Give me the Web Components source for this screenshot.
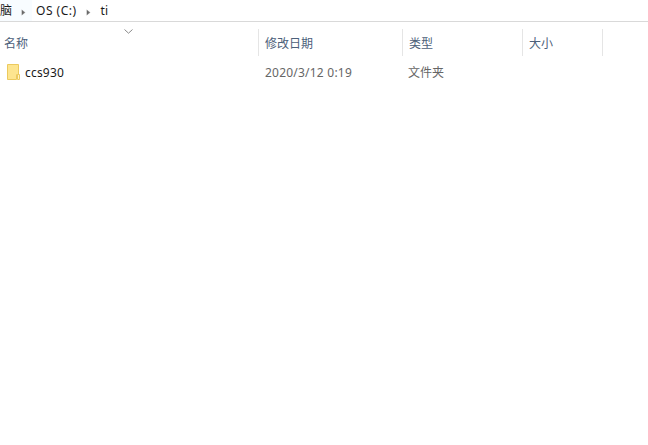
<!DOCTYPE html>
<html>
<head>
<meta charset="utf-8">
<style>
    html, body { margin: 0; padding: 0; background: #fff; }
    body { width: 648px; height: 445px; overflow: hidden; font-family: "Noto Sans", "Noto Sans CJK SC", sans-serif; font-size: 12px; }
</style>
</head>
<body>
<fm-address>
    <fm-crumb>脑</fm-crumb>
    <fm-crumb style="letter-spacing: .5px">OS (C:)</fm-crumb>
    <fm-crumb last>ti</fm-crumb>
</fm-address>
<fm-header>
    <fm-column style="--w: 259px; --pad: 4px" sorted>名称</fm-column>
    <fm-column style="--w: 144px">修改日期</fm-column>
    <fm-column style="--w: 120px">类型</fm-column>
    <fm-column style="--w: 80px">大小</fm-column>
</fm-header>
<fm-row name="ccs930" date="2020/3/12 0:19" type="文件夹"></fm-row>

<script>
customElements.define('fm-address', class extends HTMLElement {
    constructor() {
        super();
        this.attachShadow({mode: 'open'}).innerHTML = `
            <style>
                :host {
                    display: flex;
                    align-items: center;
                    height: 21px;
                    border-bottom: 1px solid #d9d9d9;
                    color: #1a1a1a;
                    background: linear-gradient(#f8fcff, #f8fcff) 0 0 / 32px 100% no-repeat;
                }
            </style>
            <slot></slot>`;
    }
});

customElements.define('fm-crumb', class extends HTMLElement {
    constructor() {
        super();
        var last = this.hasAttribute('last');
        this.attachShadow({mode: 'open'}).innerHTML = `
            <style>
                :host { display: flex; align-items: center; line-height: 18px; }
                svg { margin: 3px 10px 0 9px; }
            </style>
            <slot></slot>
            ${last ? '' : '<svg width="5" height="7" viewBox="0 0 5 7"><path d="M.6 .4 L4.4 3.5 L.6 6.6 Z" fill="#8a8a8a"/><path d="M1 1.5 L3 3.5 L1 5.5 Z" fill="#666"/></svg>'}`;
    }
});

customElements.define('fm-header', class extends HTMLElement {
    constructor() {
        super();
        this.attachShadow({mode: 'open'}).innerHTML = `
            <style>
                :host { display: flex; height: 27px; margin-top: 7px; }
            </style>
            <slot></slot>`;
    }
});

customElements.define('fm-column', class extends HTMLElement {
    constructor() {
        super();
        var sorted = this.hasAttribute('sorted');
        this.attachShadow({mode: 'open'}).innerHTML = `
            <style>
                :host {
                    display: flex;
                    align-items: center;
                    position: relative;
                    box-sizing: border-box;
                    width: var(--w);
                    padding-left: var(--pad, 6px);
                    border-right: 1px solid #e5e5e5;
                    color: #4c607a;
                }
                svg { position: absolute; left: 124px; top: 0; }
            </style>
            <slot></slot>
            ${sorted ? '<svg width="9" height="5" viewBox="0 0 9 5"><path d="M0.5 0.5 L4.5 4.2 L8.5 0.5" fill="none" stroke="#8a8a8a"/></svg>' : ''}`;
    }
});

customElements.define('fm-row', class extends HTMLElement {
    constructor() {
        super();
        this.attachShadow({mode: 'open'}).innerHTML = `
            <style>
                :host { display: flex; align-items: center; height: 22px; margin-top: 5px; color: #666; }
                .name { display: flex; align-items: center; gap: 5px; box-sizing: border-box; width: 265px; padding-left: 7px; color: #1a1a1a; letter-spacing: .2px; }
                .date { width: 143px; letter-spacing: .22px; }
            </style>
            <div class="name">
                <svg width="13" height="16" viewBox="0 0 13 16">
                    <path d="M0.5 0.5 H11.5 V10.5 H9.5 V15.5 H0.5 Z" fill="#fde58f" stroke="#ecca5e"/>
                    <path d="M10.5 10.5 H12.5 V15.5 H10.5 Z" fill="#fff3c4" stroke="#ecca5e"/>
                </svg>
                <span>${this.getAttribute('name')}</span>
            </div>
            <div class="date">${this.getAttribute('date')}</div>
            <div>${this.getAttribute('type')}</div>`;
    }
});
</script>
</body>
</html>
